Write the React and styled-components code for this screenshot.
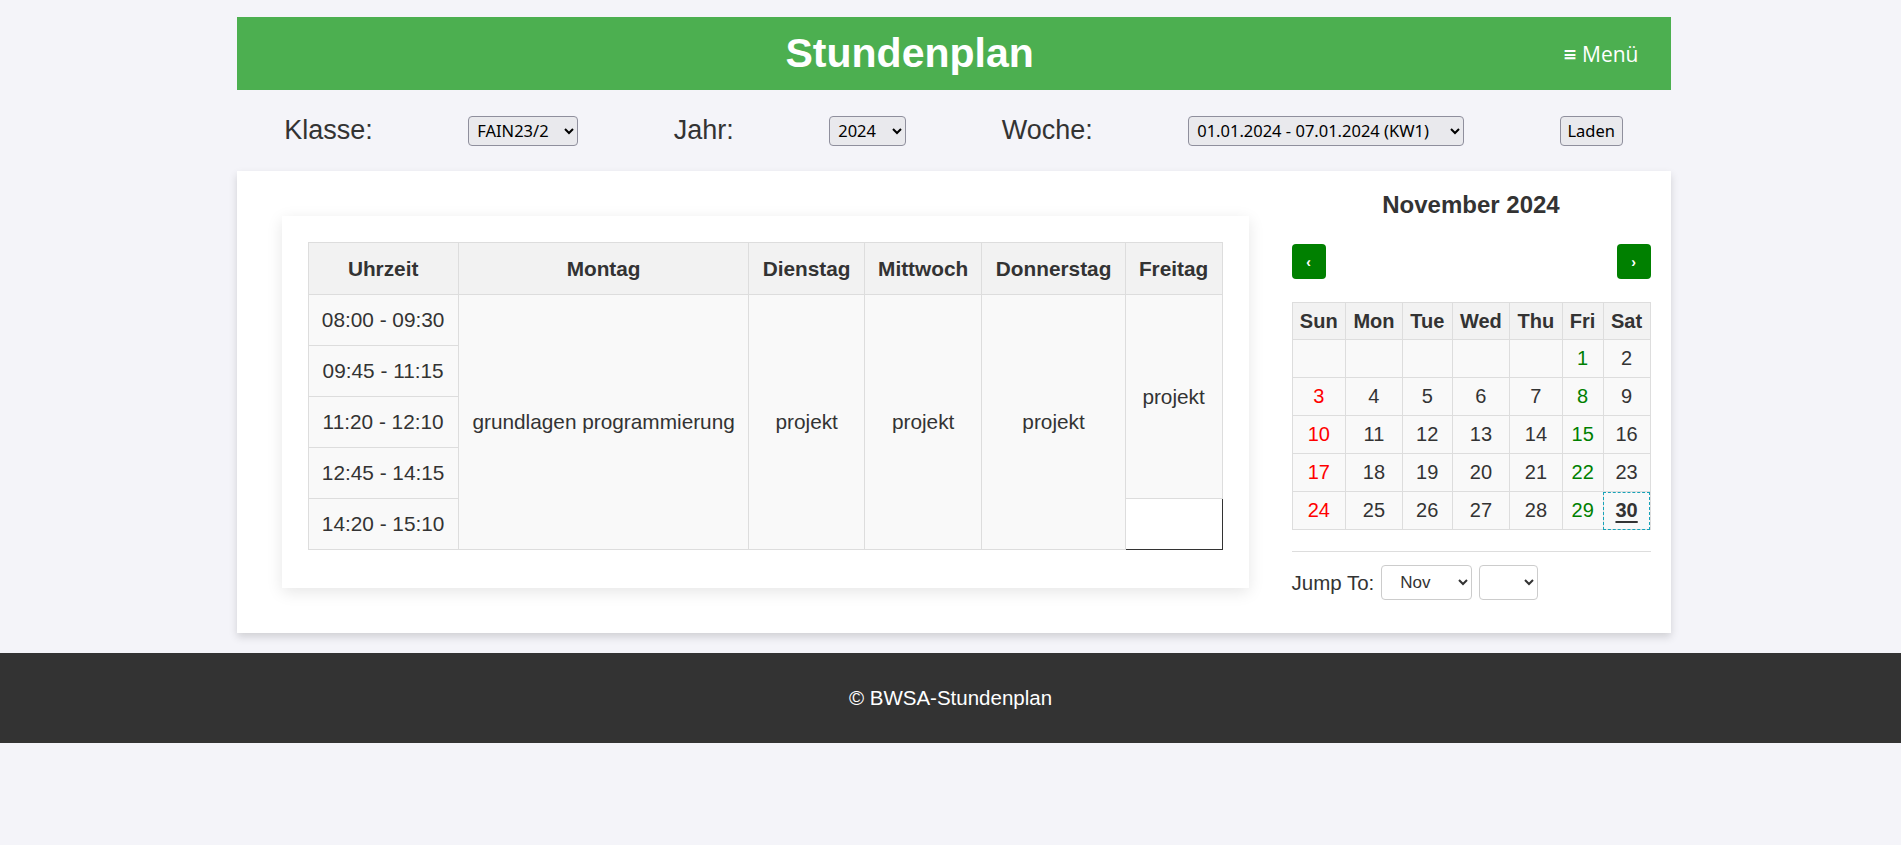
import React from 'react';
import styled, { createGlobalStyle } from 'styled-components';

const GlobalStyle = createGlobalStyle`
  body {
    margin: 0;
    background: #f4f4f9;
    font-family: "Liberation Sans", Arial, sans-serif;
    color: #333;
  }
`;

const Page = styled.div`
  min-height: 845px;
`;

const Container = styled.div`
  width: 1434px;
  margin: 0 0 0 calc(50% - 714px);
  padding-top: 17px;
`;

const Header = styled.header`
  height: 73px;
  background: #4caf50;
  color: #fff;
  display: flex;
  align-items: center;
  padding: 0 32px 0 20px;
`;

const Title = styled.h1`
  flex: 1;
  margin: 0;
  text-align: center;
  font-size: 41px;
  font-weight: bold;
`;

const MenuButton = styled.button`
  display: flex;
  align-items: center;
  gap: 5px;
  padding: 0;
  border: none;
  background: none;
  color: #fff;
  font-family: "Open Sans", "Noto Sans", sans-serif;
  font-size: 21px;
  cursor: pointer;
`;

const MenuIcon = styled.span`
  font-family: "DejaVu Sans", sans-serif;
  font-size: 17px;
  font-weight: bold;
`;

const Filters = styled.div`
  height: 81px;
  display: flex;
  align-items: center;
  justify-content: space-around;
`;

const FilterLabel = styled.label`
  font-size: 27px;
  color: #333;
`;

const NativeSelect = styled.select`
  width: ${(p) => p.$w}px;
  height: 30px;
  padding: 0 4px;
  font-family: "Noto Sans", sans-serif;
  font-size: 16.5px;
  color: #000;
  background: #e9e9ed;
  border: 1px solid #8f8f9d;
  border-radius: 4px;
`;

const LoadButton = styled.button`
  width: 63px;
  height: 30px;
  padding: 0;
  font-family: "Noto Sans", sans-serif;
  font-size: 16.5px;
  color: #000;
  background: #e9e9ed;
  border: 1px solid #8f8f9d;
  border-radius: 4px;
`;

const Card = styled.main`
  background: #fff;
  padding: 20px;
  display: flex;
  align-items: flex-start;
  gap: 18px;
  box-shadow: 0 4px 8px rgba(0, 0, 0, 0.15);
`;

const TimetableBox = styled.section`
  flex: 1;
  margin: 25px;
  padding: 26px 26px 38px;
  background: #fff;
  box-shadow: 0 4px 15px rgba(0, 0, 0, 0.1);
`;

const Timetable = styled.table`
  width: 100%;
  border-collapse: collapse;
  font-size: 20.8px;
  color: #333;
`;

const Th = styled.th`
  background: #f2f2f2;
  border: 1px solid #ddd;
  padding: 13px;
  line-height: 25px;
  font-weight: bold;
`;

const Td = styled.td`
  background: #f9f9f9;
  border: 1px solid #ddd;
  padding: 13px;
  line-height: 24px;
  text-align: center;
`;

const EmptyCell = styled.td`
  background: #fff;
  border: 1px solid #ddd;
  border-right-color: #333;
  border-bottom-color: #333;
`;

const Calendar = styled.aside`
  flex: none;
  width: 359px;
`;

const CalTitle = styled.h2`
  margin: 0 0 25px;
  font-size: 24px;
  line-height: 28px;
  text-align: center;
`;

const NavRow = styled.div`
  display: flex;
  justify-content: space-between;
  margin-bottom: 23px;
`;

const NavButton = styled.button`
  width: 34px;
  height: 35px;
  padding: 0;
  border: none;
  border-radius: 4px;
  background: #008000;
  color: #fff;
  font-family: "Liberation Sans", Arial, sans-serif;
  font-size: 14px;
  font-weight: bold;
`;

const CalTable = styled.table`
  width: 100%;
  border-collapse: collapse;
  font-size: 20px;
`;

const CalTh = styled.th`
  background: #f2f2f2;
  border: 1px solid #ddd;
  padding: 7px 7px 6px;
  line-height: 23px;
`;

const tones = { sun: '#ff0000', fri: '#008000', plain: '#333' };

const CalTd = styled.td`
  background: #f9f9f9;
  border: 1px solid #ddd;
  padding: 7px 7px;
  line-height: 23px;
  text-align: center;
  color: ${(p) => tones[p.$tone]};
  ${(p) =>
    p.$today &&
    `
    font-weight: bold;
    text-decoration: underline;
    text-decoration-thickness: 2px;
    text-underline-offset: 4px;
    outline: 1px dashed #17a2b8;
    outline-offset: -1px;
  `}
`;

const Divider = styled.hr`
  margin: 21px 0 13px;
  border: none;
  border-top: 1px solid #ddd;
`;

const JumpRow = styled.div`
  display: flex;
  align-items: center;
  gap: 7px;
  font-size: 20.5px;
`;

const JumpSelect = styled.select`
  width: ${(p) => p.$w}px;
  height: 35px;
  padding: 0 0 0 14px;
  font-family: "Liberation Sans", Arial, sans-serif;
  font-size: 17px;
  color: #333;
  background: #fff;
  border: 1px solid #ccc;
  border-radius: 4px;
`;

const Footer = styled.footer`
  margin-top: 20px;
  padding: 33px 0;
  background: #333;
  color: #fff;
  text-align: center;
  font-size: 20.5px;
  line-height: 24px;
`;

const times = ['08:00 - 09:30', '09:45 - 11:15', '11:20 - 12:10', '12:45 - 14:15', '14:20 - 15:10'];
const weekdays = ['Sun', 'Mon', 'Tue', 'Wed', 'Thu', 'Fri', 'Sat'];
const weeks = [
  [null, null, null, null, null, 1, 2],
  [3, 4, 5, 6, 7, 8, 9],
  [10, 11, 12, 13, 14, 15, 16],
  [17, 18, 19, 20, 21, 22, 23],
  [24, 25, 26, 27, 28, 29, 30],
];

const toneFor = (i) => (i === 0 ? 'sun' : i === 5 ? 'fri' : 'plain');

export default function App() {
  return (
    <Page>
      <GlobalStyle />
      <Container>
        <Header>
          <Title>Stundenplan</Title>
          <MenuButton>
            <MenuIcon>≡</MenuIcon>Menü
          </MenuButton>
        </Header>

        <Filters>
          <FilterLabel>Klasse:</FilterLabel>
          <NativeSelect $w={110} defaultValue="FAIN23/2">
            <option>FAIN23/2</option>
          </NativeSelect>
          <FilterLabel>Jahr:</FilterLabel>
          <NativeSelect $w={77} defaultValue="2024">
            <option>2024</option>
          </NativeSelect>
          <FilterLabel>Woche:</FilterLabel>
          <NativeSelect $w={276}>
            <option>01.01.2024 - 07.01.2024 (KW1)</option>
          </NativeSelect>
          <LoadButton>Laden</LoadButton>
        </Filters>

        <Card>
          <TimetableBox>
            <Timetable>
              <thead>
                <tr>
                  <Th>Uhrzeit</Th>
                  <Th>Montag</Th>
                  <Th>Dienstag</Th>
                  <Th>Mittwoch</Th>
                  <Th>Donnerstag</Th>
                  <Th>Freitag</Th>
                </tr>
              </thead>
              <tbody>
                {times.map((t, i) => (
                  <tr key={t}>
                    <Td>{t}</Td>
                    {i === 0 && (
                      <>
                        <Td rowSpan={5}>grundlagen programmierung</Td>
                        <Td rowSpan={5}>projekt</Td>
                        <Td rowSpan={5}>projekt</Td>
                        <Td rowSpan={5}>projekt</Td>
                        <Td rowSpan={4}>projekt</Td>
                      </>
                    )}
                    {i === 4 && <EmptyCell />}
                  </tr>
                ))}
              </tbody>
            </Timetable>
          </TimetableBox>

          <Calendar>
            <CalTitle>November 2024</CalTitle>
            <NavRow>
              <NavButton>‹</NavButton>
              <NavButton>›</NavButton>
            </NavRow>
            <CalTable>
              <thead>
                <tr>
                  {weekdays.map((d) => (
                    <CalTh key={d}>{d}</CalTh>
                  ))}
                </tr>
              </thead>
              <tbody>
                {weeks.map((week, w) => (
                  <tr key={w}>
                    {week.map((day, i) => (
                      <CalTd key={i} $tone={toneFor(i)} $today={day === 30}>
                        {day}
                      </CalTd>
                    ))}
                  </tr>
                ))}
              </tbody>
            </CalTable>
            <Divider />
            <JumpRow>
              <span>Jump To:</span>
              <JumpSelect $w={91} defaultValue="Nov">
                <option>Nov</option>
              </JumpSelect>
              <JumpSelect $w={59}>
                <option></option>
              </JumpSelect>
            </JumpRow>
          </Calendar>
        </Card>
      </Container>

      <Footer>© BWSA-Stundenplan</Footer>
    </Page>
  );
}
